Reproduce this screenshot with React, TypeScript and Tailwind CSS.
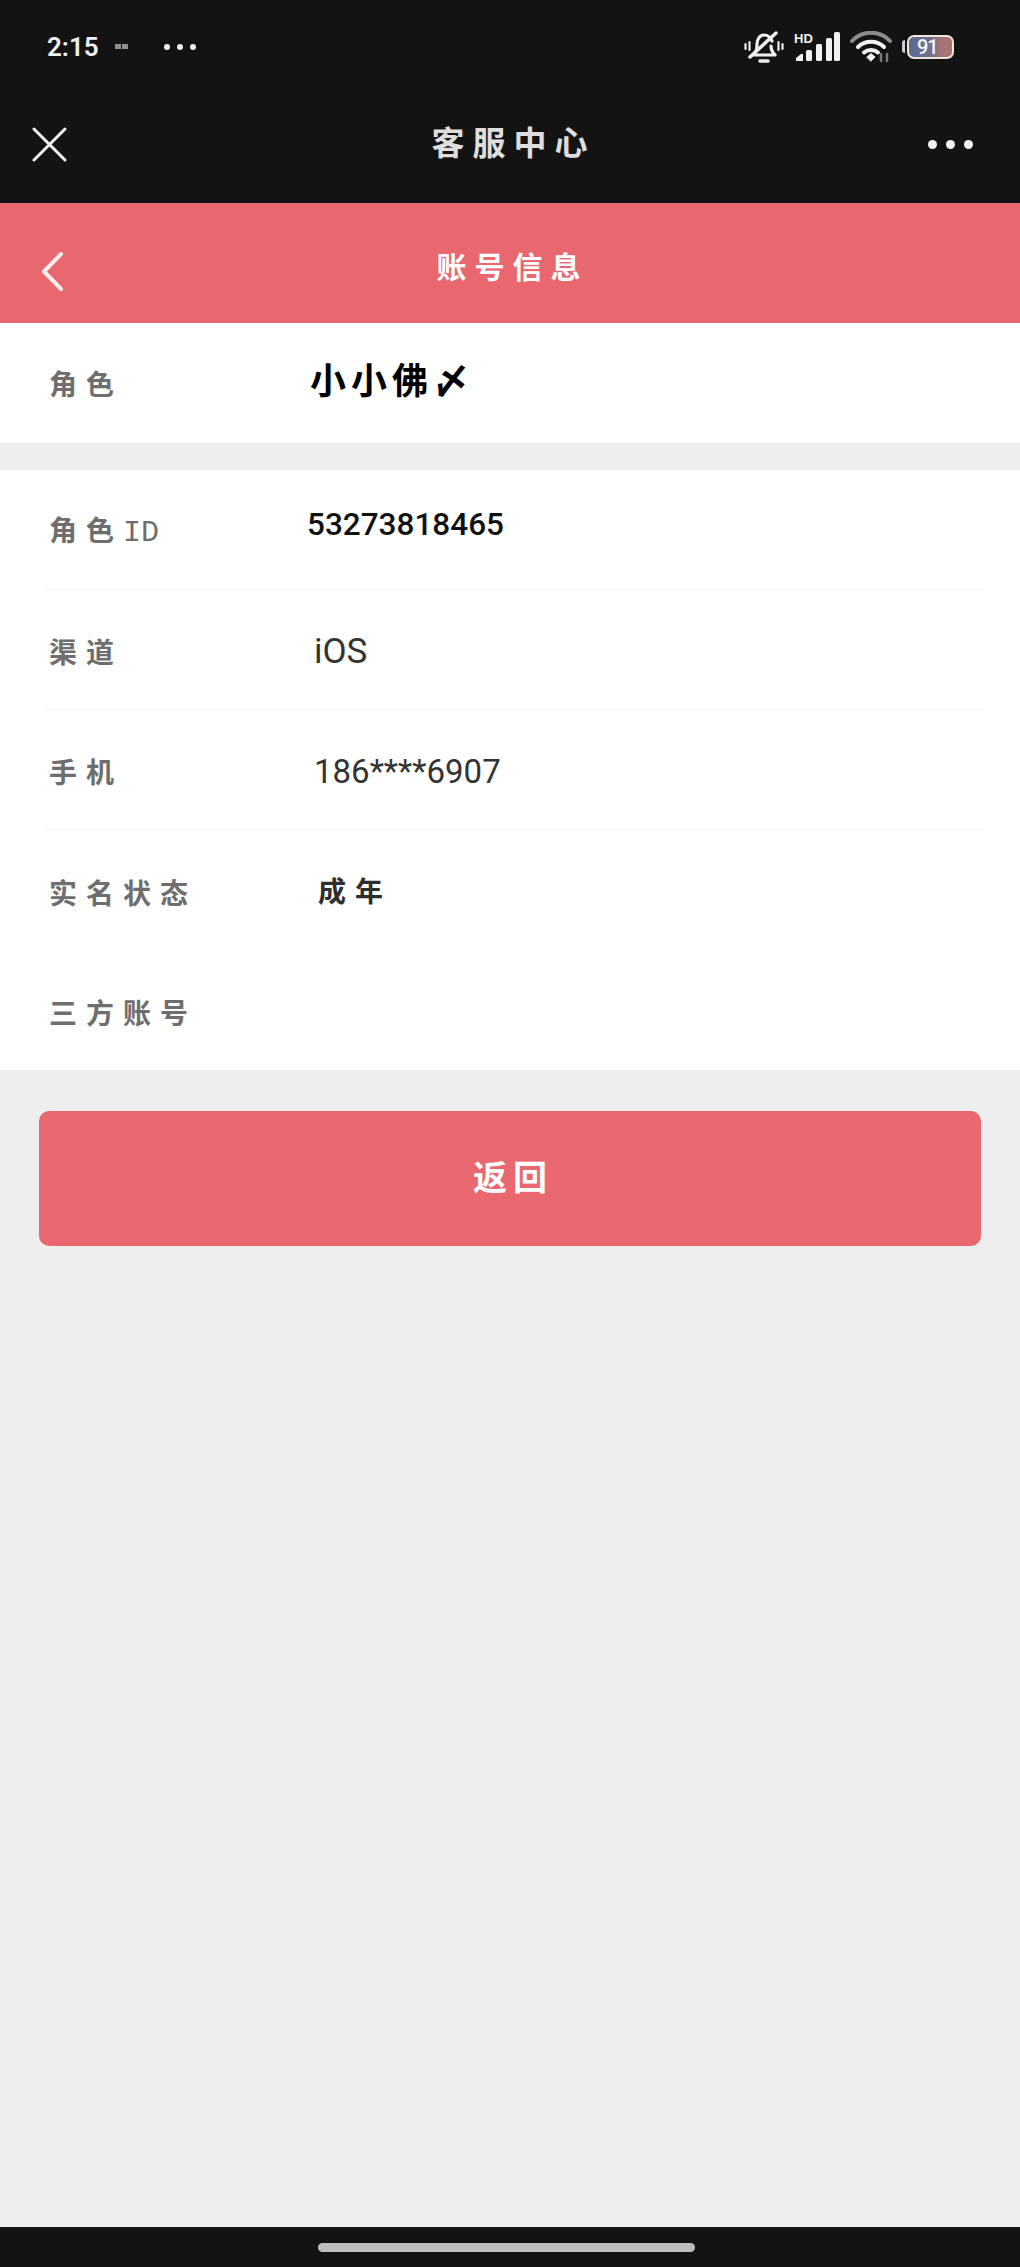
const cjk = "font-['Noto_Sans_CJK_SC','Noto_Sans',sans-serif]";

function BellOff() {
  return (
    <svg width="40" height="34" viewBox="0 0 40 34" fill="none" stroke="#eeeeee" strokeWidth="3.2" strokeLinecap="round" strokeLinejoin="round">
      <path d="M11 23c2-3 2-5 2-9 0-5 3-9 7-9s7 3 8 6" />
      <path d="M27 16c0 4 2 7 4 9H9" />
      <path d="M16 31h8" strokeWidth="3.500" />
      <path d="M6 27 32 3" strokeWidth="3.500" />
      <path d="M1.500 14v5M5.500 12v8M34.500 12v8M38.500 14v5" strokeWidth="2.200" />
    </svg>
  );
}

function Signal() {
  return (
    <svg width="46" height="29" viewBox="0 0 46 29" fill="#f2f2f2">
      <path d="M2 29v-3l5-4h2v7z" />
      <rect x="12" y="18" width="6" height="11" rx="1.500" />
      <rect x="22" y="12" width="6" height="17" rx="1.500" />
      <rect x="32" y="6" width="6" height="23" rx="1.500" />
      <rect x="40" y="0" width="6" height="29" rx="1.500" />
      <text x="0" y="11" fontSize="13" fontWeight="700" fontFamily="Liberation Sans, sans-serif">HD</text>
    </svg>
  );
}

function Wifi() {
  return (
    <svg width="42" height="31" viewBox="0 0 42 31" fill="none" strokeLinecap="round">
      <path d="M2 10C12 -1 30 -1 40 10" stroke="#8c8c8c" strokeWidth="4" />
      <path d="M8 16c7-7 19-7 26 0" stroke="#f2f2f2" strokeWidth="4" />
      <path d="M14 21.500c4-3.500 10-3.500 14 0" stroke="#f2f2f2" strokeWidth="4" />
      <path d="M17 26 21 22.500l4 3.500-4 4z" fill="#f2f2f2" stroke="#f2f2f2" strokeWidth="1" />
      <path d="M31 23v7M37 23v7" stroke="#777777" strokeWidth="2.500" />
    </svg>
  );
}

function Battery() {
  return (
    <div className="flex items-center gap-[2px]">
      <div className="h-[13px] w-[3px] rounded-l-full bg-[#cfcfcf]" />
      <div className="flex h-[24px] w-[47px] items-center overflow-hidden rounded-[7px] border-2 border-[#f0e6d8] bg-[linear-gradient(90deg,#5b6a94_0%,#77708c_55%,#a87370_75%,#a87370_100%)]">
        <span className="ml-[8px] font-['Roboto',sans-serif] text-[20px] leading-none font-medium tracking-[-1px] text-[#f4f4f4]">91</span>
      </div>
    </div>
  );
}

function Label({ text, suffix, className }: { text: string; suffix?: string; className?: string }) {
  return (
    <div className={`${cjk} w-[260px] pl-[4px] text-[28px] leading-none font-bold tracking-[9px] text-[#6e6e6e] ${className ?? "mt-[3px]"}`}>
      {text}
      {suffix ? <span className="font-['Liberation_Mono',monospace] text-[30px] font-normal tracking-normal">{suffix}</span> : null}
    </div>
  );
}

function Row({ label, suffix, children, last }: { label: string; suffix?: string; children?: React.ReactNode; last?: boolean }) {
  return (
    <div className={`ml-[45px] mr-[36px] flex h-[120px] items-center ${last ? "" : "border-b border-[#f6f6f6]"}`}>
      <Label text={label} suffix={suffix} />
      {children}
    </div>
  );
}

export default function App() {
  return (
    <div className="flex h-[2267px] w-[1020px] flex-col overflow-hidden bg-[#eeeeee]">
      <div className="h-[203px] bg-[#131313]">
        <div className="flex h-[93px] items-center justify-between pl-[47px] pr-[66px]">
          <div className="flex items-center">
            <span className="font-['Roboto',sans-serif] text-[26px] leading-none font-semibold text-[#f0f0f0]">2:15</span>
            <span className="ml-[16px] flex gap-[1px]">
              <span className="h-[5px] w-[6px] bg-[#8f8f8f]" />
              <span className="h-[5px] w-[6px] bg-[#8f8f8f]" />
            </span>
            <span className="ml-[36px] flex gap-[7px]">
              <span className="size-[6px] rounded-full bg-[#f0f0f0]" />
              <span className="size-[6px] rounded-full bg-[#f0f0f0]" />
              <span className="size-[6px] rounded-full bg-[#f0f0f0]" />
            </span>
          </div>
          <div className="flex items-center gap-[10px]">
            <BellOff />
            <Signal />
            <Wifi />
            <Battery />
          </div>
        </div>
        <div className="grid h-[102px] grid-cols-[1fr_auto_1fr] items-center pl-[32px] pr-[47px]">
          <svg width="35" height="35" viewBox="0 0 35 35" stroke="#f2f2f2" strokeWidth="3" strokeLinecap="round">
            <path d="M2 2l31 31M33 2 2 33" />
          </svg>
          <div className={`${cjk} mb-[5px] ml-[22px] text-[33px] leading-none font-bold tracking-[8px] text-[#dedede]`}>客服中心</div>
          <div className="flex justify-end gap-[9px]">
            <span className="size-[9px] rounded-full bg-[#f2f2f2]" />
            <span className="size-[9px] rounded-full bg-[#f2f2f2]" />
            <span className="size-[9px] rounded-full bg-[#f2f2f2]" />
          </div>
        </div>
      </div>

      <div className="grid h-[120px] grid-cols-[1fr_auto_1fr] items-center bg-[#e9686f] pl-[41px] pr-[86px] pt-[16px]">
        <svg width="23" height="39" viewBox="0 0 23 39" fill="none" stroke="#fbeeee" strokeWidth="4" strokeLinecap="round" strokeLinejoin="round">
          <path d="M20 2 3 19.500 20 37" />
        </svg>
        <div className={`${cjk} mb-[12px] ml-[50px] text-[30px] leading-none font-bold tracking-[8px] text-white`}>账号信息</div>
        <div />
      </div>

      <div className="bg-white">
        <div className="ml-[45px] mr-[36px] flex h-[120px] items-center">
          <Label text="角色" className="mt-0" />
          <div className={`${cjk} mb-[10px] ml-[5px] text-[36px] leading-none font-bold tracking-[5px] text-black`}>小小佛〆</div>
        </div>
      </div>

      <div className="mt-[27px] bg-white">
        <Row label="角色" suffix="ID">
          <span className="mb-[10px] ml-[2px] font-['Roboto',sans-serif] text-[31.500px] leading-none font-medium text-[#111111]">53273818465</span>
        </Row>
        <Row label="渠道">
          <span className="ml-[9px] mt-[3px] font-['Roboto',sans-serif] text-[35px] leading-none text-[#333333]">iOS</span>
        </Row>
        <Row label="手机">
          <span className="ml-[9px] mt-[3px] font-['Roboto',sans-serif] text-[33px] leading-none text-[#333333]">186****6907</span>
        </Row>
        <Row label="实名状态" last>
          <span className={`${cjk} ml-[13px] text-[28px] leading-none font-bold tracking-[9px] text-[#2e2e2e]`}>成年</span>
        </Row>
        <Row label="三方账号" last />
      </div>

      <div className="mx-[39px] mt-[41px] flex h-[135px] items-center justify-center rounded-[10px] bg-[#e9686f]">
        <span className={`${cjk} mb-[5px] pl-[6px] text-[34px] leading-none font-bold tracking-[6px] text-white`}>返回</span>
      </div>

      <div className="mt-auto flex h-[40px] items-center justify-center bg-[#131313]">
        <div className="ml-[-7px] h-[9px] w-[377px] rounded-full bg-[#bdbdbd]" />
      </div>
    </div>
  );
}
